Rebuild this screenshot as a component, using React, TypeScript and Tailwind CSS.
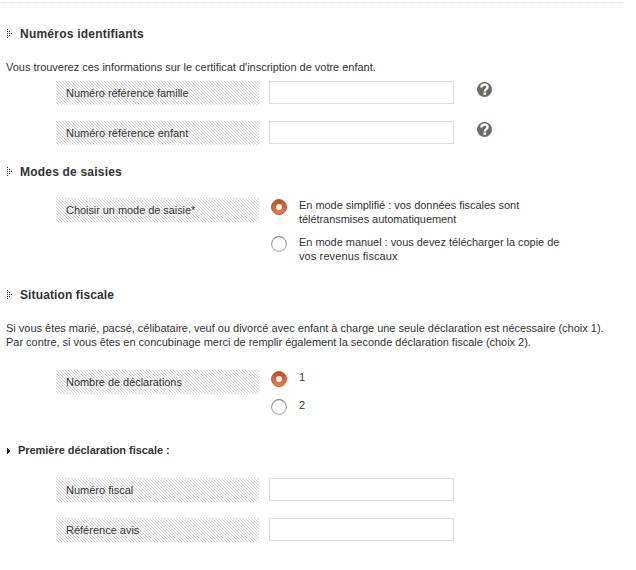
import React, { useId } from "react";

function Arrow() {
  const dots = [[0, 0], [0, 2], [0, 4], [0, 6], [0, 8], [2, 2], [2, 4], [2, 6], [4, 4]];
  return (
    <svg width="6" height="9" shapeRendering="crispEdges" fill="#2b2b2b" className="mr-[7px] mb-0.5 shrink-0">
      {dots.map(([x, y]) => (
        <rect key={`${x}-${y}`} x={x} y={y} width="1" height="1" />
      ))}
    </svg>
  );
}

function Title({ children }: { children: React.ReactNode }) {
  return (
    <h2 className="flex h-4 items-center pl-[7px] text-[12px] leading-4 font-bold">
      <Arrow />
      {children}
    </h2>
  );
}

function Label({ children }: { children: React.ReactNode }) {
  const id = useId();
  return (
    <div className="relative h-6 w-[203px] shrink-0 pl-2.5 leading-6">
      <svg className="absolute inset-0" width="203" height="24" shapeRendering="crispEdges">
        <defs>
          <pattern id={id} width="3" height="3" patternUnits="userSpaceOnUse">
            <path d="M0 0h1v1h-1zM1 1h1v1h-1zM2 2h1v1h-1z" fill="#d3d3d3" />
          </pattern>
        </defs>
        <rect width="203" height="24" fill={`url(#${id})`} />
      </svg>
      <span className="relative">{children}</span>
    </div>
  );
}

function Help() {
  return (
    <svg width="15" height="15" viewBox="0 0 15 15" className="mt-px ml-[23px]">
      <circle cx="7.5" cy="7.5" r="7.5" fill="#6f6b62" />
      <path d="M4.3 5.6C4.3 3.5 5.6 2.7 7.5 2.7s3.1 1 3.1 2.5c0 2-2.8 2-2.8 4.2" fill="none" stroke="#fff" strokeWidth="2.3" />
      <rect x="6.5" y="10.5" width="2.6" height="2.3" fill="#fff" />
    </svg>
  );
}

function Field({ label, help }: { label: React.ReactNode; help?: boolean }) {
  return (
    <div className="flex h-6 items-start pl-14">
      <Label>{label}</Label>
      <input className="ml-2.5 h-[23px] w-[185px] border border-[#ddd] bg-white" />
      {help && <Help />}
    </div>
  );
}

function Radio({ checked }: { checked?: boolean }) {
  const id = useId();
  return (
    <svg width="16" height="16" viewBox="0 0 16 16" className="mt-px mr-3 shrink-0">
      <defs>
        <linearGradient id={id} x2="0" y2="1">
          <stop stopColor={checked ? "#c8481a" : "#888"} />
          <stop offset="1" stopColor={checked ? "#ea7f55" : "#b5b5b5"} />
        </linearGradient>
      </defs>
      {checked ? (
        <>
          <circle cx="8" cy="8" r="7.5" fill={`url(#${id})`} stroke="#b5603f" />
          <circle cx="8" cy="8" r="2.9" fill="#fff" />
        </>
      ) : (
        <circle cx="8" cy="8" r="7.4" fill="#fff" stroke={`url(#${id})`} strokeWidth="1.1" />
      )}
    </svg>
  );
}

function Choice({ checked, children }: { checked?: boolean; children: React.ReactNode }) {
  return (
    <div className="flex items-start">
      <Radio checked={checked} />
      <div>{children}</div>
    </div>
  );
}

export default function App() {
  return (
    <main className="h-[570px] w-[636px] overflow-hidden bg-white pt-0.5 font-['Liberation_Sans',Arial,sans-serif] text-[11px] leading-[14px] text-[#333]">
      <div className="w-[623px] border-t border-dotted border-[#d3d3d3]" />
      <section className="pt-[23px]">
        <Title><span className="tracking-[0.23px]">Numéros identifiants</span></Title>
        <p className="mt-[18px] pl-1.5 tracking-[-0.012px]">Vous trouverez ces informations sur le certificat d'inscription de votre enfant.</p>
        <div className="mt-[7px] flex flex-col gap-4">
          <Field label={<span className="tracking-[-0.04px]">Numéro référence famille</span>} help />
          <Field label="Numéro référence enfant" help />
        </div>
      </section>
      <section className="pt-[19px]">
        <Title><span className="tracking-[0.2px]">Modes de saisies</span></Title>
        <div className="mt-[18px] flex h-[65px] items-start pl-14">
          <Label><span className="tracking-[-0.06px]">Choisir un mode de saisie*</span></Label>
          <div className="ml-3 flex flex-col gap-[9px]">
            <Choice checked>
              <span className="tracking-[-0.04px]">En mode simplifié : vos données fiscales sont</span><br />
              <span className="tracking-[-0.06px]">télétransmises automatiquement</span>
            </Choice>
            <Choice>
              <span className="tracking-[-0.04px]">En mode manuel : vous devez télécharger la copie de</span><br />
              <span className="tracking-[0.11px]">vos revenus fiscaux</span>
            </Choice>
          </div>
        </div>
      </section>
      <section className="pt-6">
        <Title><span className="tracking-[0.12px]">Situation fiscale</span></Title>
        <p className="mt-[18px] pl-1.5 whitespace-nowrap">
          <span className="tracking-[-0.008px]">Si vous êtes marié, pacsé, célibataire, veuf ou divorcé avec enfant à charge une seule déclaration est nécessaire (choix 1).</span><br />
          <span className="tracking-[-0.026px]">Par contre, si vous êtes en concubinage merci de remplir également la seconde déclaration fiscale (choix 2).</span>
        </p>
        <div className="mt-[21px] flex h-[45px] items-start pl-14">
          <Label><span className="tracking-[-0.04px]">Nombre de déclarations</span></Label>
          <div className="ml-3 flex flex-col gap-[11px]">
            <Choice checked>1</Choice>
            <Choice>2</Choice>
          </div>
        </div>
      </section>
      <section className="pt-7">
        <h3 className="flex items-center pl-[7px] font-bold tracking-[-0.04px]">
          <svg width="4" height="6" className="mt-px mr-[7px]" shapeRendering="crispEdges">
            <path d="M0 0h1v1h1v1h1v2h-1v1h-1v1h-1z" fill="#222" />
          </svg>
          Première déclaration fiscale :
        </h3>
        <div className="mt-[21px] flex flex-col gap-4">
          <Field label="Numéro fiscal" />
          <Field label="Référence avis" />
        </div>
      </section>
    </main>
  );
}
